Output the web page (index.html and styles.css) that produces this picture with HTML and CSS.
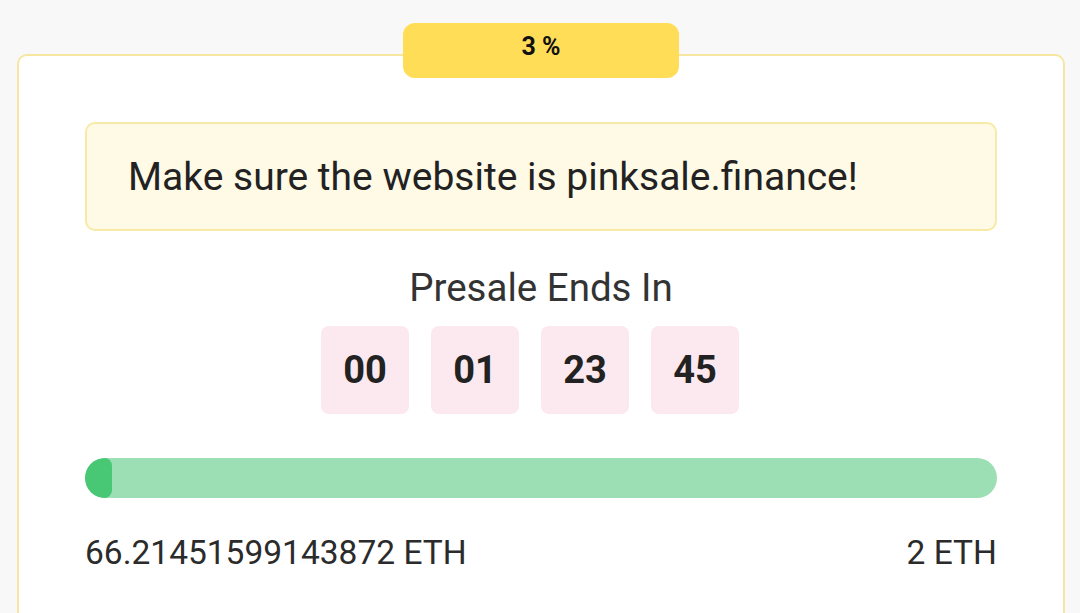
FILE: index.html
```html
<!DOCTYPE html>
<html lang="en">

<head>
  <meta charset="UTF-8" />
  <meta name="viewport" content="width=device-width, initial-scale=1" />
  <title>Presale</title>
  <link rel="stylesheet" href="styles.css">
</head>

<body>
  <div class="card">
    <div class="badge">3 %</div>

    <div class="notice">
      Make sure the website is pinksale.finance!
    </div>

    <h2 class="title">Presale Ends In</h2>
    <div class="countdown">
      <div class="count-box">00</div>
      <div class="count-box">01</div>
      <div class="count-box">23</div>
      <div class="count-box">45</div>
    </div>

    <div class="progress">
      <div class="progress-fill" style="width: 3%"></div>
    </div>

    <div class="amounts">
      <span>66.21451599143872 ETH</span>
      <span>2 ETH</span>
    </div>
  </div>
</body>

</html>
```

FILE: styles.css
```css
* {
  margin: 0;
  padding: 0;
  box-sizing: border-box;
  font-family: Roboto, 'Liberation Sans', sans-serif;
}

body {
  background-color: #f8f8f8;
  color: #2b2b2b;
  height: 613px;
  overflow: hidden;
}

.card {
  position: relative;
  margin: 54px 15px 0 17px;
  height: 559px;
  background-color: #fff;
  border: 2px solid #f6e6a2;
  border-bottom: none;
  border-radius: 10px 10px 0 0;
  padding: 66px 66px 0;
}

.badge {
  position: absolute;
  top: -33px;
  left: 50%;
  transform: translateX(-50%);
  width: 276px;
  height: 55px;
  border-radius: 12px;
  background-color: #ffdd57;
  color: #111;
  font-size: 25px;
  line-height: 30px;
  font-weight: bold;
  text-align: center;
  padding-top: 9px;
}

.notice {
  height: 109px;
  display: flex;
  align-items: center;
  padding: 0 41px;
  background-color: #fffae6;
  border: 2px solid #f7eaa6;
  border-radius: 10px;
  font-size: 39px;
  color: #222;
}

.title {
  margin-top: 37px;
  text-align: center;
  font-size: 38.5px;
  line-height: 40px;
  font-weight: normal;
  color: #333;
}

.countdown {
  margin-top: 18px;
  display: flex;
  justify-content: center;
}

.count-box {
  width: 88px;
  height: 88px;
  margin-right: 22px;
  border-radius: 8px;
  background-color: #fce8ef;
  display: flex;
  justify-content: center;
  align-items: center;
  font-size: 38px;
  font-weight: bold;
  color: #222;
}

.progress {
  margin-top: 44px;
  height: 40px;
  border-radius: 20px;
  background-color: #9ddfb4;
  overflow: hidden;
}

.progress-fill {
  height: 100%;
  background-color: #48c774;
  border-radius: 20px 8px 8px 20px;
}

.amounts {
  margin-top: 37px;
  display: flex;
  justify-content: space-between;
  font-size: 33.5px;
  line-height: 36px;
  color: #2b2b2b;
}
```
